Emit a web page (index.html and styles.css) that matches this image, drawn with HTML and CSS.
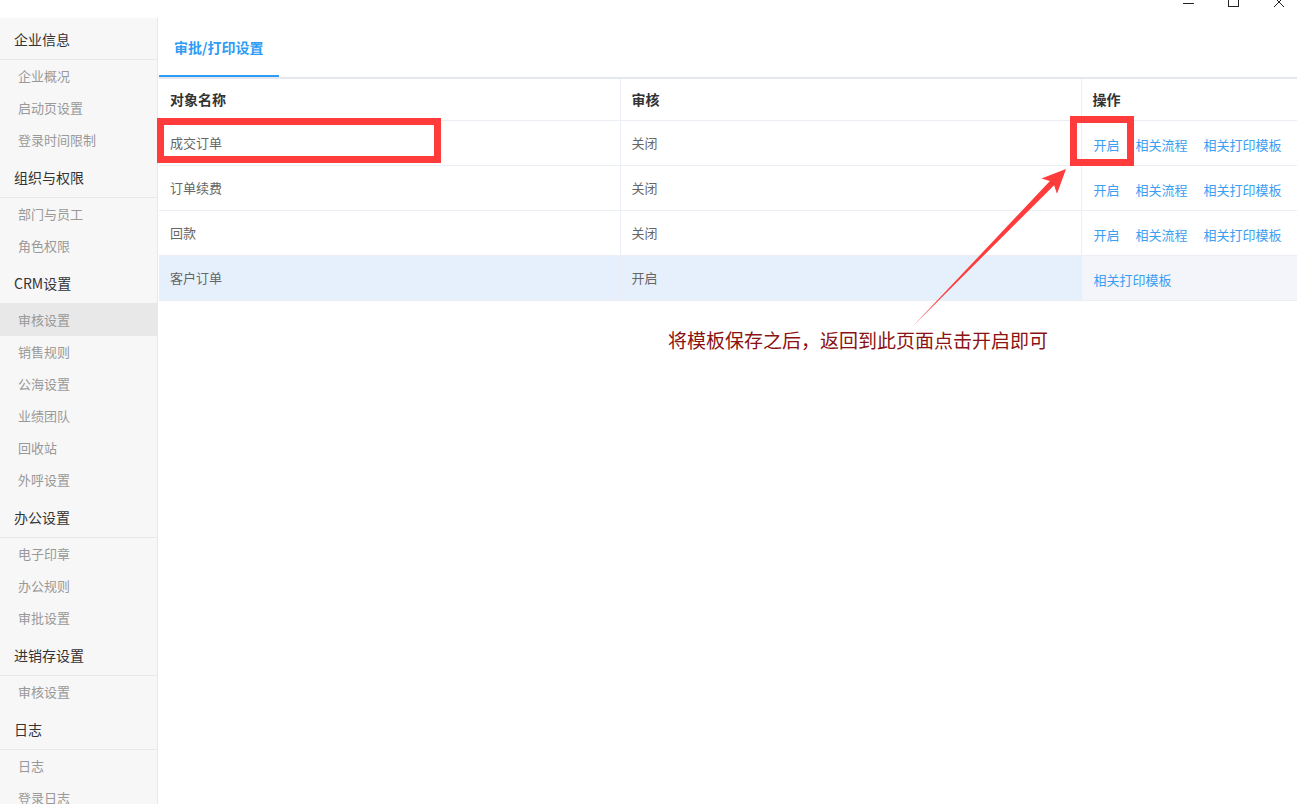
FILE: index.html
```html
<!DOCTYPE html>
<html>
<head>
  <meta charset="utf-8">
  <title>审批/打印设置</title>
  <link rel="stylesheet" href="styles.css">
</head>
<body>
  <div class="titlebar">
    <svg class="win-ctrl" width="157" height="18" viewBox="0 0 157 18">
      <line x1="43" y1="3.5" x2="54" y2="3.5" stroke="#222" stroke-width="1"/>
      <rect x="88.5" y="-4.5" width="10" height="11" fill="none" stroke="#222" stroke-width="1"/>
      <path d="M134 -3 L144 7 M144 -3 L134 7" stroke="#222" stroke-width="1"/>
    </svg>
  </div>

  <div class="layout">
    <div class="sidebar">
      <div class="group-title">企业信息</div>
      <div class="nav-item">企业概况</div>
      <div class="nav-item">启动页设置</div>
      <div class="nav-item">登录时间限制</div>

      <div class="group-title">组织与权限</div>
      <div class="nav-item">部门与员工</div>
      <div class="nav-item">角色权限</div>

      <div class="group-title">CRM设置</div>
      <div class="nav-item active">审核设置</div>
      <div class="nav-item">销售规则</div>
      <div class="nav-item">公海设置</div>
      <div class="nav-item">业绩团队</div>
      <div class="nav-item">回收站</div>
      <div class="nav-item">外呼设置</div>

      <div class="group-title">办公设置</div>
      <div class="nav-item">电子印章</div>
      <div class="nav-item">办公规则</div>
      <div class="nav-item">审批设置</div>

      <div class="group-title">进销存设置</div>
      <div class="nav-item">审核设置</div>

      <div class="group-title">日志</div>
      <div class="nav-item">日志</div>
      <div class="nav-item">登录日志</div>
    </div>

    <div class="main">
      <div class="tabs">
        <div class="tab active">审批/打印设置</div>
      </div>

      <table class="grid">
        <thead>
          <tr>
            <th class="col-name">对象名称</th>
            <th class="col-state">审核</th>
            <th class="col-ops">操作</th>
          </tr>
        </thead>
        <tbody>
          <tr>
            <td>成交订单</td>
            <td>关闭</td>
            <td class="ops"><a>开启</a><a>相关流程</a><a>相关打印模板</a></td>
          </tr>
          <tr>
            <td>订单续费</td>
            <td>关闭</td>
            <td class="ops"><a>开启</a><a>相关流程</a><a>相关打印模板</a></td>
          </tr>
          <tr>
            <td>回款</td>
            <td>关闭</td>
            <td class="ops"><a>开启</a><a>相关流程</a><a>相关打印模板</a></td>
          </tr>
          <tr class="hover">
            <td>客户订单</td>
            <td>开启</td>
            <td class="ops"><a>相关打印模板</a></td>
          </tr>
        </tbody>
      </table>
    </div>
  </div>

  <!-- annotation layer -->
  <div class="mark mark-name"></div>
  <div class="mark mark-open"></div>
  <svg class="arrow" width="1297" height="804" viewBox="0 0 1297 804">
    <polygon fill="#ff3b3b" points="913,326 1049.9,181.1 1041.4,178.4 1066,169 1057,193.8 1054.1,185.3"/>
  </svg>
  <div class="note">将模板保存之后，返回到此页面点击开启即可</div>
</body>
</html>
```

FILE: styles.css
```css
* {
  box-sizing: border-box;
}
html, body {
  margin: 0;
  padding: 0;
  height: 100%;
}
body {
  font-family: "Noto Sans CJK SC", "Noto Sans", sans-serif;
  background: #fff;
  color: #333;
  overflow: hidden;
  position: relative;
}

/* window bar */
.titlebar {
  height: 18px;
  display: flex;
  justify-content: flex-end;
  background: #fff;
}
.win-ctrl {
  display: block;
}

.layout {
  display: flex;
  height: calc(100vh - 18px);
}

/* left menu */
.sidebar {
  width: 158px;
  flex-shrink: 0;
  background: #f7f7f7;
  border-right: 1px solid #e9e9e9;
}
.group-title {
  height: 42px;
  line-height: 42px;
  padding-left: 14px;
  font-size: 14px;
  color: #333;
  border-bottom: 1px solid #e8e8e8;
}
.nav-item {
  height: 32px;
  line-height: 32px;
  padding-left: 18px;
  font-size: 13px;
  color: #999;
}
.nav-item.active {
  background: #e8e8e8;
}

/* content */
.main {
  flex: 1;
  padding-left: 1px;
}
.tabs {
  display: flex;
  border-bottom: 2px solid #e4e7ed;
}
.tab {
  width: 120px;
  height: 59px;
  padding: 2px 0 0 15px;
  line-height: 55px;
  font-size: 14px;
  font-weight: bold;
  color: #2e9cf5;
  border-bottom: 2px solid transparent;
}
.tab.active {
  border-bottom-color: #2e9cf5;
}

.grid {
  width: 100%;
  border-collapse: collapse;
  table-layout: fixed;
  font-size: 13px;
}
.grid th,
.grid td {
  text-align: left;
  padding: 0 0 0 11px;
  border-bottom: 1px solid #ebeef5;
  border-right: 1px solid #ebeef5;
}
.grid th {
  height: 41px;
  font-size: 14px;
  color: #333;
  font-weight: bold;
}
.grid td {
  height: 45px;
  padding-bottom: 1px;
  color: #666;
}
.col-name,
.col-state {
  width: 461px;
}
.grid .ops {
  padding: 4px 0 0 12px;
  border-right: none;
  white-space: nowrap;
}
.grid th.col-ops {
  border-right: none;
}
.ops a {
  color: #3a9ef2;
  margin-right: 16px;
  cursor: pointer;
}
.ops a:last-child {
  margin-right: 0;
}
.grid tr.hover td {
  background: #e6f0fc;
}
.grid tr.hover td.ops {
  background: #f3f5fa;
}

/* annotations drawn over the page */
.mark {
  position: absolute;
  border: 7px solid #ff3b3b;
}
.mark-name {
  left: 157px;
  top: 118px;
  width: 284px;
  height: 45px;
}
.mark-open {
  left: 1070px;
  top: 116px;
  width: 64px;
  height: 50px;
}
.arrow {
  position: absolute;
  left: 0;
  top: 0;
  pointer-events: none;
}
.note {
  position: absolute;
  left: 668px;
  top: 327px;
  font-size: 19px;
  line-height: 26px;
  color: #8a1212;
  white-space: nowrap;
}
```
